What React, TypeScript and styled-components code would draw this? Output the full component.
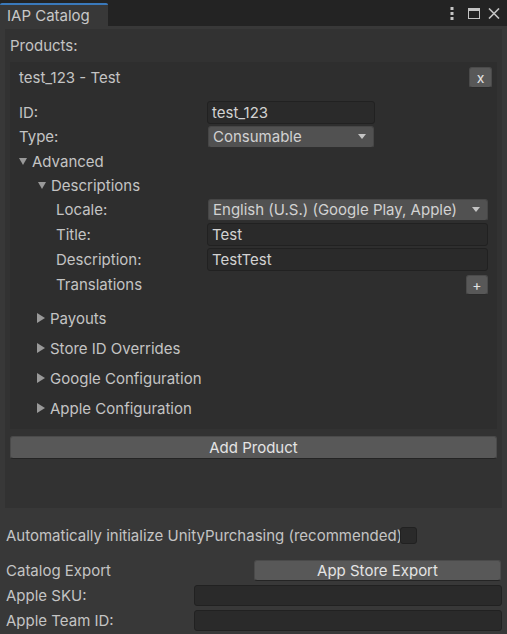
import React from "react";
import styled, { createGlobalStyle } from "styled-components";

const Global = createGlobalStyle`
  html, body { margin: 0; padding: 0; background: #383838; }
  body { font-family: Inter, "Noto Sans", sans-serif; font-size: 15px; color: #c4c4c4; }
  * { box-sizing: border-box; }
`;

const Window = styled.div`
  width: 507px;
  height: 634px;
  display: flex;
  flex-direction: column;
  background: #383838;
  overflow: hidden;
`;

const TabBar = styled.div`
  height: 26px;
  padding-top: 3px;
  background: #232323;
  display: flex;
  align-items: stretch;
`;

const Tab = styled.div`
  width: 108px;
  background: #383838;
  border-top: 2px solid #3a79bb;
  border-top-left-radius: 2px;
  border-top-right-radius: 2px;
  padding-left: 7px;
  display: flex;
  align-items: center;
  font-size: 15px;
  color: #c8c8c8;
`;

const TabIcons = styled.div`
  margin-left: auto;
  display: flex;
  align-items: center;
  padding-right: 7px;
  padding-bottom: 3px;
`;

const IconSlot = styled.div<{ $ml: number }>`
  margin-left: ${(p) => p.$ml}px;
  height: 16px;
  display: flex;
  align-items: center;
  justify-content: center;
`;

const Body = styled.div`
  flex: 1;
  display: flex;
  flex-direction: column;
  padding: 3px 5px 0 5px;
`;

const ListBox = styled.div`
  background: #323232;
  padding: 5px 5px 49px 5px;
  display: flex;
  flex-direction: column;
`;

const ListLabel = styled.div`
  height: 24px;
  line-height: 24px;
  margin-bottom: 4px;
`;

const ProductBox = styled.div`
  background: #2e2e2e;
  padding: 0 9px 6px 9px;
  display: flex;
  flex-direction: column;
`;

const HeaderRow = styled.div`
  height: 30px;
  display: flex;
  align-items: center;
  justify-content: space-between;
  margin-right: -4px;
  margin-bottom: 8px;
`;

const Row = styled.div<{ $h: number; $indent?: number }>`
  height: ${(p) => p.$h}px;
  display: flex;
  align-items: center;
  padding-left: ${(p) => p.$indent ?? 0}px;
`;

const FieldLabel = styled.div<{ $w: number }>`
  width: ${(p) => p.$w}px;
  flex-shrink: 0;
  white-space: nowrap;
  overflow: hidden;
`;

const Input = styled.div<{ $w?: number }>`
  ${(p) => (p.$w ? `width: ${p.$w}px;` : "flex: 1;")}
  height: 23px;
  background: #2a2a2a;
  border: 1px solid #212121;
  border-radius: 3px;
  padding-left: 4px;
  display: flex;
  align-items: center;
  color: #d2d2d2;
`;

const Dropdown = styled.div<{ $w?: number }>`
  ${(p) => (p.$w ? `width: ${p.$w}px;` : "flex: 1;")}
  height: 22px;
  background: #515151;
  border: 1px solid #464646;
  border-bottom-color: #2f2f2f;
  border-radius: 3px;
  padding: 0 7px 0 4px;
  display: flex;
  align-items: center;
  justify-content: space-between;
  color: #d2d2d2;
`;

const Caret = styled.span`
  width: 0;
  height: 0;
  border-left: 4.5px solid transparent;
  border-right: 4.5px solid transparent;
  border-top: 5px solid #c4c4c4;
`;

const SmallButton = styled.div<{ $w: number; $h: number }>`
  width: ${(p) => p.$w}px;
  height: ${(p) => p.$h}px;
  background: #585858;
  border: 1px solid #4a4a4a;
  border-bottom-color: #2a2a2a;
  border-radius: 3px;
  display: flex;
  align-items: center;
  justify-content: center;
  color: #e4e4e4;
  font-size: 14px;
`;

const Foldout = styled.div<{ $h: number; $indent: number }>`
  height: ${(p) => p.$h}px;
  display: flex;
  align-items: center;
  padding-left: ${(p) => p.$indent}px;
`;

const Arrow = styled.span<{ $open: boolean }>`
  width: 13px;
  display: inline-flex;
  align-items: center;
  &::before {
    content: "";
    width: 0;
    height: 0;
    ${(p) =>
      p.$open
        ? `border-left: 4.5px solid transparent; border-right: 4.5px solid transparent; border-top: 7px solid #999;`
        : `border-top: 5px solid transparent; border-bottom: 5px solid transparent; border-left: 8px solid #999;`}
  }
`;

const FoldGroup = styled.div`
  margin-top: 6px;
  display: flex;
  flex-direction: column;
`;

const WideButton = styled.div`
  margin-top: 7px;
  height: 23px;
  background: #585858;
  border: 1px solid #4a4a4a;
  border-bottom-color: #242424;
  border-radius: 3px;
  display: flex;
  align-items: center;
  justify-content: center;
  color: #e4e4e4;
`;

const Settings = styled.div`
  padding: 16px 0 0 1px;
  display: flex;
  flex-direction: column;
`;

const CheckRow = styled.div`
  height: 22px;
  display: flex;
  align-items: center;
  margin-bottom: 13px;
`;

const Checkbox = styled.div`
  width: 17px;
  height: 17px;
  background: #2a2a2a;
  border: 1px solid #212121;
  border-radius: 3px;
`;

const ExportButton = styled.div`
  flex: 1;
  height: 21px;
  margin-right: 1px;
  background: #585858;
  border: 1px solid #4a4a4a;
  border-bottom-color: #242424;
  border-radius: 3px;
  display: flex;
  align-items: center;
  justify-content: center;
  color: #e4e4e4;
`;

const SetRow = styled.div`
  height: 23px;
  display: flex;
  align-items: center;
  margin-bottom: 2px;
`;

const SetInput = styled.div`
  flex: 1;
  height: 21px;
  background: #2a2a2a;
  border: 1px solid #212121;
  border-radius: 3px;
`;

const MenuIcon = () => (
  <svg width="4" height="13" viewBox="0 0 4 13">
    <rect x="0.5" y="0" width="3" height="3" fill="#c4c4c4" />
    <rect x="0.5" y="5" width="3" height="3" fill="#c4c4c4" />
    <rect x="0.5" y="10" width="3" height="3" fill="#c4c4c4" />
  </svg>
);

const MaxIcon = () => (
  <svg width="12" height="11" viewBox="0 0 12 11">
    <rect x="0.5" y="0.5" width="11" height="10" fill="none" stroke="#c4c4c4" strokeWidth="1" />
    <rect x="0.5" y="0.5" width="11" height="2.5" fill="#c4c4c4" />
  </svg>
);

const CloseIcon = () => (
  <svg width="12" height="11" viewBox="0 0 12 11">
    <path d="M1 0.5 L11 10.5 M11 0.5 L1 10.5" stroke="#c4c4c4" strokeWidth="1.6" />
  </svg>
);

export default function App() {
  return (
    <>
      <Global />
      <Window>
        <TabBar>
          <Tab>IAP Catalog</Tab>
          <TabIcons>
            <IconSlot $ml={0}>
              <MenuIcon />
            </IconSlot>
            <IconSlot $ml={14}>
              <MaxIcon />
            </IconSlot>
            <IconSlot $ml={8}>
              <CloseIcon />
            </IconSlot>
          </TabIcons>
        </TabBar>
        <Body>
          <ListBox>
            <ListLabel>Products:</ListLabel>
            <ProductBox>
              <HeaderRow>
                <span>test_123 - Test</span>
                <SmallButton $w={23} $h={21}>x</SmallButton>
              </HeaderRow>
              <Row $h={24}>
                <FieldLabel $w={188}>ID:</FieldLabel>
                <Input $w={168}>test_123</Input>
              </Row>
              <Row $h={25}>
                <FieldLabel $w={189}>Type:</FieldLabel>
                <Dropdown $w={166}>
                  <span>Consumable</span>
                  <Caret />
                </Dropdown>
              </Row>
              <Foldout $h={25} $indent={0}>
                <Arrow $open />
                Advanced
              </Foldout>
              <Foldout $h={23} $indent={19}>
                <Arrow $open />
                Descriptions
              </Foldout>
              <Row $h={25} $indent={37}>
                <FieldLabel $w={152}>Locale:</FieldLabel>
                <Dropdown>
                  <span>English (U.S.) (Google Play, Apple)</span>
                  <Caret />
                </Dropdown>
              </Row>
              <Row $h={25} $indent={37}>
                <FieldLabel $w={151}>Title:</FieldLabel>
                <Input>Test</Input>
              </Row>
              <Row $h={25} $indent={37}>
                <FieldLabel $w={151}>Description:</FieldLabel>
                <Input>TestTest</Input>
              </Row>
              <Row $h={25} $indent={37}>
                <FieldLabel $w={151}>Translations</FieldLabel>
                <span style={{ flex: 1 }} />
                <SmallButton $w={22} $h={20}>+</SmallButton>
              </Row>
              <FoldGroup>
                <Foldout $h={30} $indent={18}>
                  <Arrow $open={false} />
                  Payouts
                </Foldout>
                <Foldout $h={30} $indent={18}>
                  <Arrow $open={false} />
                  Store ID Overrides
                </Foldout>
                <Foldout $h={30} $indent={18}>
                  <Arrow $open={false} />
                  Google Configuration
                </Foldout>
                <Foldout $h={30} $indent={18}>
                  <Arrow $open={false} />
                  Apple Configuration
                </Foldout>
              </FoldGroup>
            </ProductBox>
            <WideButton>Add Product</WideButton>
          </ListBox>
          <Settings>
            <CheckRow>
              <FieldLabel $w={394}>Automatically initialize UnityPurchasing (recommended)</FieldLabel>
              <Checkbox />
            </CheckRow>
            <SetRow>
              <FieldLabel $w={248}>Catalog Export</FieldLabel>
              <ExportButton>App Store Export</ExportButton>
            </SetRow>
            <SetRow>
              <FieldLabel $w={188}>Apple SKU:</FieldLabel>
              <SetInput />
            </SetRow>
            <SetRow>
              <FieldLabel $w={188}>Apple Team ID:</FieldLabel>
              <SetInput />
            </SetRow>
          </Settings>
        </Body>
      </Window>
    </>
  );
}
